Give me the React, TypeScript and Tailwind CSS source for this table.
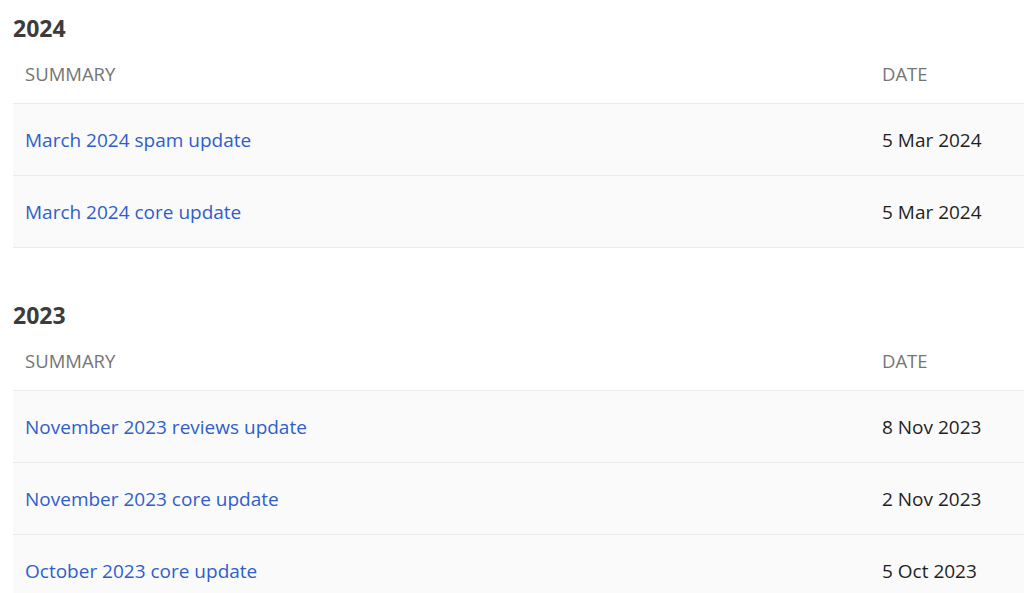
const sections = [
  {
    year: "2024",
    rows: [
      { title: "March 2024 spam update", date: "5 Mar 2024" },
      { title: "March 2024 core update", date: "5 Mar 2024" },
    ],
  },
  {
    year: "2023",
    rows: [
      { title: "November 2023 reviews update", date: "8 Nov 2023" },
      { title: "November 2023 core update", date: "2 Nov 2023" },
      { title: "October 2023 core update", date: "5 Oct 2023" },
    ],
  },
];

export default function App() {
  return (
    <div className="h-[593px] overflow-hidden bg-white pl-[13px] pt-[12px] font-['Open_Sans',sans-serif]">
      <div className="flex flex-col gap-[51px]">
        {sections.map((section) => (
          <section key={section.year}>
            <h2 className="h-[32px] text-[23px] font-bold leading-[32px] text-[#3c3c3c]">
              {section.year}
            </h2>

            <div className="grid grid-cols-[1fr_154px] border-b border-[#ebebeb] pt-[18px] pb-[17px] text-[18.5px] leading-[24px] text-[#757575]">
              <div className="pl-[12px]">SUMMARY</div>
              <div className="pl-[12px]">DATE</div>
            </div>

            {section.rows.map((row) => (
              <div
                key={row.title}
                className="grid h-[72px] grid-cols-[1fr_154px] items-center border-b border-[#ebebeb] bg-[#fafafa] text-[19px] leading-[24px]"
              >
                <a href="#" className="pl-[12px] text-[#2f5ec9]">
                  {row.title}
                </a>
                <span className="pl-[12px] text-[#1f1f1f]">{row.date}</span>
              </div>
            ))}
          </section>
        ))}
      </div>
    </div>
  );
}
